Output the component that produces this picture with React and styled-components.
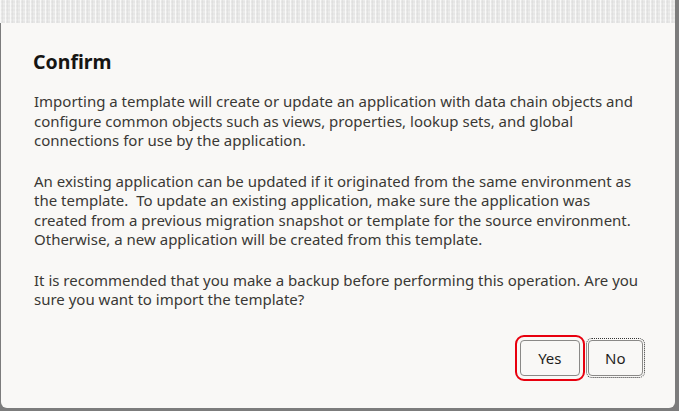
import React from "react";
import styled, { createGlobalStyle } from "styled-components";

const GlobalStyle = createGlobalStyle`
  html, body {
    margin: 0;
    padding: 0;
    background: #7c7c7c;
  }
  body {
    font-family: "Noto Sans", "Open Sans", sans-serif;
  }
`;

const Page = styled.div`
  width: 675px;
  height: 408px;
  display: flex;
  flex-direction: column;
`;

// textured band behind the dialog
const Strip = styled.div`
  height: 23px;
  flex: none;
  background-color: #ebebea;
  background-image: repeating-linear-gradient(
      90deg,
      rgba(255, 255, 255, 0.7) 0 1px,
      transparent 1px 2px,
      rgba(215, 215, 215, 0.45) 2px 3px,
      transparent 3px 5px
    ),
    repeating-linear-gradient(
      0deg,
      rgba(225, 225, 225, 0.5) 0 2px,
      transparent 2px 4px
    );
`;

const Dialog = styled.div`
  flex: 1;
  margin-left: 1px;
  background: #f9f8f6;
  border-radius: 0 0 6px 6px;
  padding: 26px 32px 0 33px;
  display: flex;
  flex-direction: column;
`;

const Title = styled.h1`
  margin: 0 0 17px -1px;
  font-size: 19.5px;
  line-height: 26px;
  font-weight: 700;
  color: #161513;
`;

const Text = styled.p`
  margin: 0 0 21px;
  font-size: 15px;
  line-height: 19.5px;
  color: #3a3835;
  white-space: nowrap;
`;

const Footer = styled.div`
  margin-top: auto;
  margin-bottom: 32px;
  display: flex;
  justify-content: flex-end;
  gap: 8px;
`;

const Button = styled.button`
  font-family: "Noto Sans", "Open Sans", sans-serif;
  font-size: 15px;
  color: #1f1e1c;
  background: #f9f8f6;
  border: 1px solid #8a8987;
  border-radius: 4px;
  height: 36px;
  padding: 0 ${(p) => (p.$wide ? 17 : 16.5)}px;
  outline: ${(p) => (p.$focused ? "2px solid #e8000e" : "1px dotted #333")};
  outline-offset: ${(p) => (p.$focused ? "3px" : "1px")};
  box-sizing: border-box;
`;

export default function App() {
  return (
    <>
      <GlobalStyle />
      <Page>
        <Strip />
        <Dialog>
          <Title>Confirm</Title>
          <Text>
            Importing a template will create or update an application with data chain objects and
            <br />
            configure common objects such as views, properties, lookup sets, and global
            <br />
            connections for use by the application.
          </Text>
          <Text>
            An existing application can be updated if it originated from the same environment as
            <br />
            {"the template.\u00a0 To update an existing application, make sure the application was"}
            <br />
            created from a previous migration snapshot or template for the source environment.
            <br />
            Otherwise, a new application will be created from this template.
          </Text>
          <Text>
            It is recommended that you make a backup before performing this operation. Are you
            <br />
            sure you want to import the template?
          </Text>
          <Footer>
            <Button $focused $wide>
              Yes
            </Button>
            <Button>No</Button>
          </Footer>
        </Dialog>
      </Page>
    </>
  );
}
